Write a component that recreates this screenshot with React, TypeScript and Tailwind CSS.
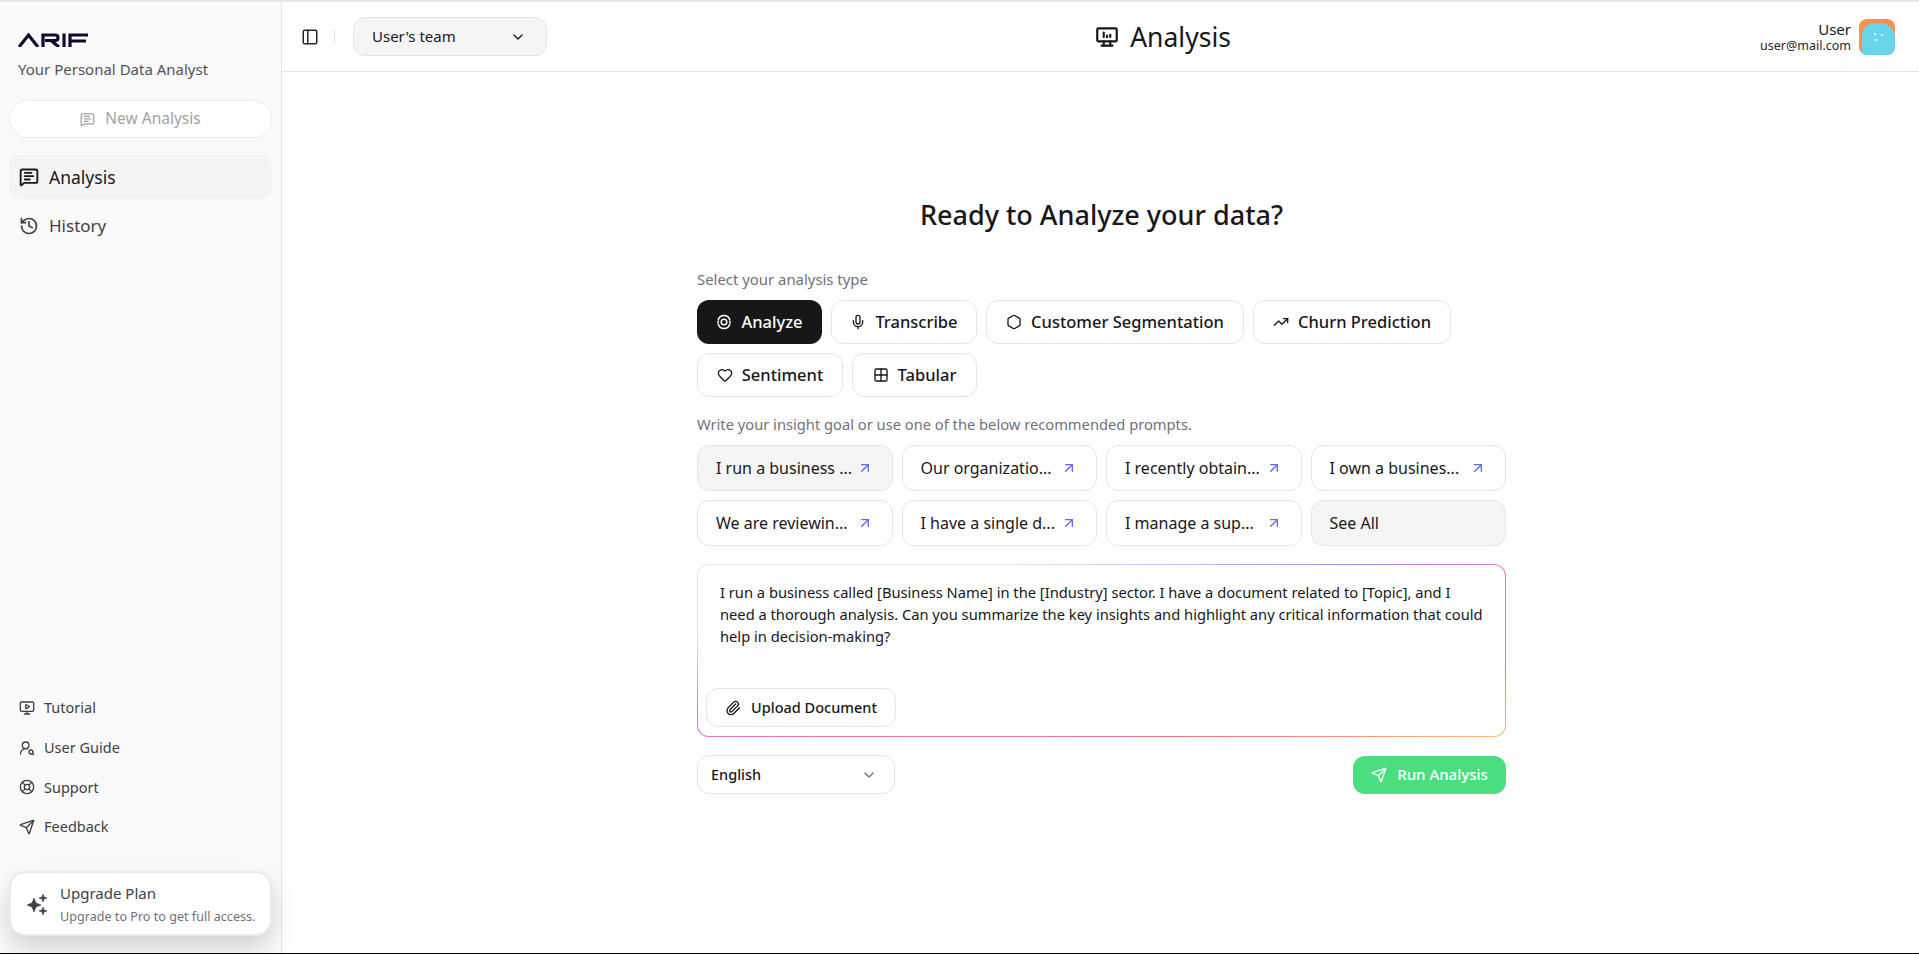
import { ArrowUpRight, ChevronDown, Grid2x2, Heart, Hexagon, History, LifeBuoy, MessageSquareText, Mic, MonitorPlay, PanelLeft, Paperclip, Send, TrendingUp, UserRoundSearch } from "lucide-react";
import { TbDeviceDesktopAnalytics } from "react-icons/tb";

function AnalyzeIcon({ size = 16 }: { size?: number }) {
  return (
    <svg width={size} height={size} viewBox="0 0 16 16" fill="none" stroke="currentColor" strokeWidth="1.5" strokeLinecap="round">
      <path d="M2.2 6 A6 6 0 0 1 13.8 6" />
      <path d="M13.8 10 A6 6 0 0 1 2.2 10" />
      <path d="M1.5 8 H2.5 M13.5 8 H14.5" />
      <circle cx="8" cy="8" r="2.8" />
    </svg>
  );
}

const types = [
  { label: "Analyze", icon: AnalyzeIcon, active: true, w: "w-[125px]" },
  { label: "Transcribe", icon: Mic, w: "w-[146px]" },
  { label: "Customer Segmentation", icon: Hexagon, w: "w-[258px]" },
  { label: "Churn Prediction", icon: TrendingUp, w: "w-[198px]" },
  { label: "Sentiment", icon: Heart, w: "w-[146px]" },
  { label: "Tabular", icon: Grid2x2, w: "w-[125px]" },
];

const prompts = [
  { label: "I run a business ...", active: true },
  { label: "Our organizatio..." },
  { label: "I recently obtain..." },
  { label: "I own a busines..." },
  { label: "We are reviewin..." },
  { label: "I have a single d..." },
  { label: "I manage a sup..." },
];

const links = [
  { label: "Tutorial", icon: MonitorPlay },
  { label: "User Guide", icon: UserRoundSearch },
  { label: "Support", icon: LifeBuoy },
  { label: "Feedback", icon: Send },
];

function Logo() {
  return (
    <svg width="70" height="15" viewBox="0 0 70 15" fill="none" stroke="#12082e" strokeWidth="3.2">
      <path d="M1 15 L10.5 3 L20 15" />
      <path d="M25 15 V3 H37 Q40 3 40 5.8 Q40 8.5 37 8.5 H27 M33 8.5 L41 15" />
      <path d="M46 1.5 V15" />
      <path d="M52 15 V3 H70 M52 9 H68" />
    </svg>
  );
}

function Sparks() {
  return (
    <svg width="22" height="22" viewBox="0 0 22 22" fill="#3f3f46" stroke="#3f3f46" strokeWidth="0.6" strokeLinejoin="round" className="shrink-0">
      <path d="M8 5 L10 10 L15 12 L10 14 L8 19 L6 14 L1 12 L6 10 Z" />
      <path d="M17 1 L18 4 L21 5 L18 6 L17 9 L16 6 L13 5 L16 4 Z" />
      <path d="M17 14 L18 17 L21 18 L18 19 L17 22 L16 19 L13 18 L16 17 Z" />
    </svg>
  );
}

function Sidebar() {
  return (
    <aside className="flex w-[282px] shrink-0 flex-col border-r border-[#e5e5e5] bg-[#fafafa]">
      <div className="px-[18px] pt-[30px]">
        <Logo />
        <p className="mt-[12px] text-[15px] leading-[20px] text-[#52525b]">Your Personal Data Analyst</p>
      </div>
      <div className="mt-[21px] px-[9px]">
        <button className="flex h-[38px] w-full items-center justify-center gap-[10px] rounded-full border border-[#ececec] bg-white text-[15.5px] text-[#a3a3a3]">
          <MessageSquareText size={15} />
          New Analysis
        </button>
        <div className="mt-[17px] flex h-[44px] items-center gap-[10px] rounded-[10px] bg-[#f4f4f5] px-[10px] text-[17.5px] text-[#18181b]">
          <MessageSquareText size={20} strokeWidth={2.2} />
          Analysis
        </div>
        <div className="mt-[5px] flex h-[44px] items-center gap-[10px] px-[10px] text-[17px] text-[#3f3f46]">
          <History size={20} />
          History
        </div>
      </div>
      <div className="mt-auto flex flex-col gap-[9.6px] px-[19px]">
        {links.map((l) => (
          <div key={l.label} className="flex h-[30px] items-center gap-[9px] text-[14.5px] text-[#3f3f46]">
            <l.icon size={16} />
            {l.label}
          </div>
        ))}
      </div>
      <div className="mb-[17px] mt-[29px] px-[9px]">
        <div className="flex h-[65px] items-center gap-[12px] rounded-[16px] border-2 border-[#eaeaea] bg-white pl-[15px] shadow-[0_12px_25px_rgba(0,0,0,0.16)]">
          <Sparks />
          <div>
            <p className="text-[15px] leading-[20px] text-[#3f3f46]">Upgrade Plan</p>
            <p className="mt-[6px] whitespace-nowrap text-[12.6px] leading-[16px] text-[#71717a]">Upgrade to Pro to get full access.</p>
          </div>
        </div>
      </div>
    </aside>
  );
}

function Header() {
  return (
    <header className="flex h-[70px] shrink-0 items-center justify-between border-b border-[#e5e5e5] bg-white pl-[19px] pr-[24px]">
      <div className="flex items-center">
        <PanelLeft size={18} className="text-[#27272a]" />
        <div className="ml-[15px] h-[16px] w-px bg-[#e5e5e5]" />
        <button className="ml-[18px] flex h-[39px] w-[194px] items-center justify-between rounded-[12px] border border-[#e5e5e5] bg-[#f5f5f5] pl-[18px] pr-[20px] text-[15px] text-[#18181b]">
          User's team
          <ChevronDown size={16} />
        </button>
      </div>
      <div className="ml-[18px] flex items-center gap-[10px]">
        <TbDeviceDesktopAnalytics size={26} className="text-[#18181b]" />
        <span className="text-[26.5px] leading-[32px] text-[#18181b]">Analysis</span>
      </div>
      <div className="flex items-center gap-[8px]">
        <div className="text-right">
          <p className="text-[15px] leading-[18px] text-[#18181b]">User</p>
          <p className="text-[12.5px] leading-[16px] text-[#27272a]">user@mail.com</p>
        </div>
        <svg width="36" height="36" viewBox="0 0 36 36" className="rounded-[8px]">
          <rect width="36" height="36" fill="#fb8f4f" />
          <path d="M3 36 V18 C3 8 9 4 18 4 C30 4 36 10 36 20 V36 Z" fill="#6ad4ea" />
          <circle cx="16" cy="15" r="1" fill="#fff" />
          <circle cx="23" cy="16" r="1" fill="#fff" />
          <circle cx="17" cy="21" r="1" fill="#fff" />
        </svg>
      </div>
    </header>
  );
}

function Workspace() {
  return (
    <div className="ml-[2px] w-[809px]">
      <h1 className="text-center text-[27px] font-medium leading-[36px] text-[#18181b]">Ready to Analyze your data?</h1>
      <p className="mt-[36px] text-[14.9px] leading-[20px] text-[#71717a]">Select your analysis type</p>
      <div className="mt-[11px] flex flex-wrap gap-[9px]">
        {types.map((t) => (
          <button
            key={t.label}
            className={
              t.active
                ? `flex h-[44px] items-center justify-center gap-[9px] rounded-[12px] bg-[#171717] text-[16.5px] font-medium text-white ${t.w}`
                : `flex h-[44px] items-center justify-center gap-[9px] rounded-[12px] border border-[#e5e5e5] bg-white text-[16.5px] font-medium text-[#18181b] ${t.w}`
            }
          >
            <t.icon size={16} />
            {t.label}
          </button>
        ))}
      </div>
      <p className="mt-[17px] text-[14.7px] leading-[20px] text-[#71717a]">Write your insight goal or use one of the below recommended prompts.</p>
      <div className="mt-[11px] grid grid-cols-4 gap-[9px]">
        {prompts.map((p) => (
          <button
            key={p.label}
            className={`flex h-[46px] min-w-0 items-center justify-between rounded-[12px] border border-[#e5e5e5] pl-[18px] pr-[19px] text-left text-[16px] text-[#18181b] ${p.active ? "bg-[#f5f5f5]" : "bg-white"}`}
          >
            <span className="whitespace-nowrap">{p.label}</span>
            <ArrowUpRight size={16} className="shrink-0 text-[#6366f1]" />
          </button>
        ))}
        <button className="flex h-[46px] items-center rounded-[12px] border border-[#e5e5e5] bg-[#f5f5f5] pl-[18px] text-[16px] text-[#18181b]">See All</button>
      </div>
      <div className="mt-[18px] rounded-[12px] bg-[linear-gradient(to_bottom_right,#e5e7eb_0%,#e5e7eb_20%,#a78bfa_40%,#f472b6_55%,#fb7185_80%,#fdba74_100%)] p-px">
        <div className="flex h-[171px] flex-col justify-between rounded-[11px] bg-white pb-[9px] pl-[8px] pr-[14px] pt-[16px]">
          <p className="whitespace-nowrap pl-[14px] text-[14.7px] leading-[22px] text-[#18181b]">
            I run a business called [Business Name] in the [Industry] sector. I have a document related to [Topic], and I<br />
            need a thorough analysis. Can you summarize the key insights and highlight any critical information that could<br />
            help in decision-making?
          </p>
          <button className="flex h-[39px] w-[190px] items-center justify-center gap-[10px] rounded-[12px] border border-[#e5e5e5] bg-white text-[14.5px] font-medium text-[#18181b]">
            <Paperclip size={16} />
            Upload Document
          </button>
        </div>
      </div>
      <div className="mt-[18px] flex items-center justify-between">
        <button className="flex h-[39px] w-[198px] items-center justify-between rounded-[12px] border border-[#e5e5e5] bg-white pl-[13px] pr-[17px] text-[14.5px] font-medium text-[#18181b]">
          English
          <ChevronDown size={16} className="text-[#71717a]" />
        </button>
        <button className="flex h-[38px] w-[153px] items-center justify-center gap-[10px] rounded-[12px] bg-[#4ade80] text-[15px] font-medium text-white">
          <Send size={16} />
          Run Analysis
        </button>
      </div>
    </div>
  );
}

export default function App() {
  return (
    <div className="flex h-[954px] flex-col overflow-hidden bg-white font-['Noto_Sans',sans-serif]">
      <div className="h-[2px] shrink-0 bg-[#e5e7eb]" />
      <div className="flex min-h-0 flex-1">
        <Sidebar />
        <main className="flex min-w-0 flex-1 flex-col">
          <Header />
          <div className="flex flex-1 justify-center pt-[125px]">
            <Workspace />
          </div>
        </main>
      </div>
      <div className="h-[1px] shrink-0 bg-black" />
    </div>
  );
}
